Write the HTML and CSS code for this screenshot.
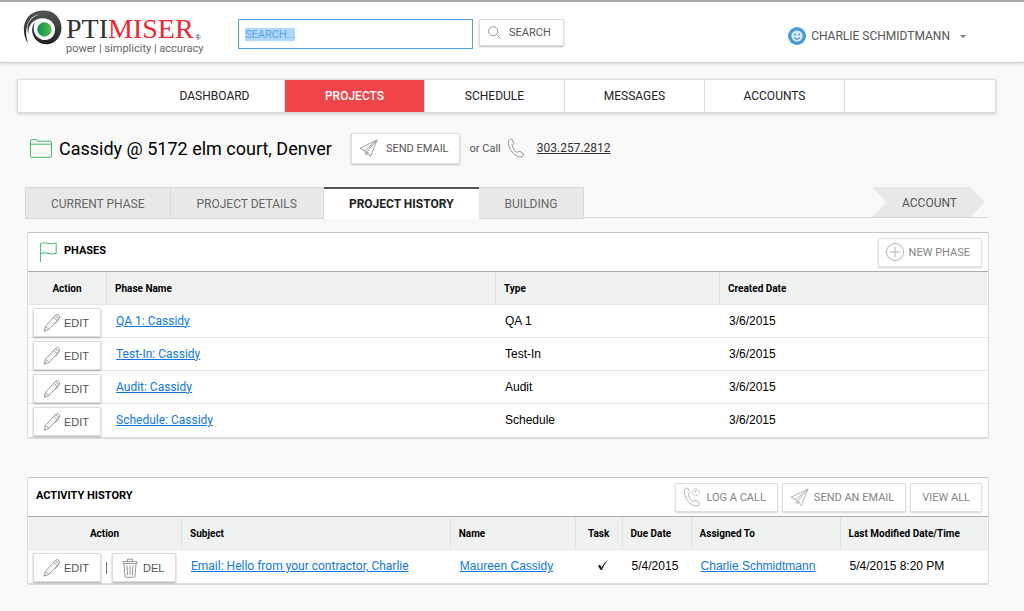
FILE: index.html
```
<!DOCTYPE html>
<html lang="en">
<head>
<meta charset="utf-8">
<title>Optimiser - Project History</title>
<link rel="stylesheet" href="styles.css">
</head>
<body>
<svg class="sprite" aria-hidden="true">
  <symbol id="pen" viewBox="0 0 18 20"><path d="M1.2 18.2 2.4 13.4 12.3 2.6 Q13.8 .8 15.8 2.2 Q17.4 3.8 16 5.6 L6 16.4ZM2.4 13.4 6 16.4M12.3 2.6 16 5.6M10.6 4.4 14.3 7.5M1.6 16.4 3 17.6M16.2 5.8 12.4 10.6"/></symbol>
  <symbol id="plane" viewBox="0 0 20 20"><path d="M19 1 1 9.8 6.2 12.2ZM19 1 8.6 13.2 12 18.6ZM6.2 12.2 7.4 16.4 8.6 13.2M7.4 16.4 10 15.2"/></symbol>
  <symbol id="phone" viewBox="0 0 18 20"><path d="M1.6 2.6 Q3.6 .2 5.4 1.6 L6.6 5.4 Q6.6 6.8 5 7.6 Q6.2 11.6 9.8 14.6 Q11.4 13 13 13.4 L16.4 15.6 Q17.6 17.4 14.8 18.8 Q10.6 20 5.6 14.6 Q.2 8 1.6 2.6Z"/></symbol>
  <symbol id="trash" viewBox="0 0 16 20"><path d="M1 3.5H15V5.5H1ZM5.5 3.5V1.2H10.5V3.5M2 5.5 3 18 Q3 19.3 4.3 19.3H11.7Q13 19.3 13 18L14 5.5M5 7.5 5.6 17.2M8 7.5V17.2M11 7.5 10.4 17.2"/></symbol>
</svg>

<header class="topbar">
  <a class="logo" href="#" aria-label="Optimiser">
    <svg class="logo-mark" viewBox="0 0 40 36" aria-hidden="true">
      <defs>
        <linearGradient id="ring" x1="0" y1="0" x2="0" y2="1"><stop offset="0" stop-color="#555"/><stop offset="1" stop-color="#222"/></linearGradient>
        <linearGradient id="core"><stop offset="0" stop-color="#079247"/><stop offset="1" stop-color="#5dbb55"/></linearGradient>
      </defs>
      <path fill="url(#ring)" d="M5.2 34 C-1.5 24 -.5 10 8.5 3.8 C15 -.6 27 -1 33.2 5.2 C40 12 40 23 34.5 29 C29.5 35.5 19.5 36 14 30.8 C8 25.5 7.5 17 12.4 11.8 C9.2 19 11 25 16 28.2 C22 32 29 29.5 31.2 24 C34 16.5 29.5 9.5 22 8.5 C10.5 7 3.6 17 5.8 25 C1.8 16 7 7 16 4.8 C9 4.5 -1.2 15 5.2 34Z"/>
      <circle cx="21.5" cy="19.5" r="7.2" fill="url(#core)"/>
    </svg>
    <span class="logo-words">
      <span class="logo-name">PTI<b>MISER</b><i>®</i></span>
      <span class="logo-tag">power | simplicity | accuracy</span>
    </span>
  </a>
  <form class="search">
    <input id="q" class="search-box" type="text" value="SEARCH..." aria-label="Search">
    <button class="btn search-btn" type="button">
      <svg class="ico ico-lens" viewBox="0 0 13 13"><circle cx="5.2" cy="5.2" r="4.6"/><path d="M8.6 8.6 12.4 12.4"/></svg>SEARCH</button>
  </form>
  <button class="user" type="button">
    <svg class="avatar" viewBox="0 0 18 18"><circle cx="9" cy="9" r="9" fill="#4a9ad4"/><circle cx="9" cy="9" r="5.6" fill="#d8ecf8"/><path d="M7 6.6V8.6M11 6.6V8.6M6 10.6Q9 13.6 12 10.6" fill="none" stroke="#3e87bd" stroke-width="1.2"/></svg>
    CHARLIE SCHMIDTMANN<span class="caret"></span></button>
</header>

<nav class="mainnav">
  <a href="#">DASHBOARD</a><a href="#" class="active">PROJECTS</a><a href="#">SCHEDULE</a><a href="#">MESSAGES</a><a href="#">ACCOUNTS</a>
</nav>

<main class="page">
  <div class="title-row">
    <svg class="ico ico-folder" viewBox="0 0 22 19"><path d="M.5 17V2Q.5 .6 2 .6H6Q7.4 .6 7.6 2.2H20Q21.5 2.2 21.5 3.8V17Q21.5 18.4 20 18.4H2Q.5 18.4 .5 17ZM.5 5.2H21.5"/></svg>
    <h1>Cassidy @ 5172 elm court, Denver</h1>
    <button class="btn email-btn" type="button"><svg class="ico ico-plane"><use href="#plane"/></svg>SEND EMAIL</button>
    <span class="or-call">or Call</span>
    <svg class="ico ico-phone"><use href="#phone"/></svg>
    <a class="phone" href="tel:3032572812">303.257.2812</a>
  </div>

  <div class="tabs">
    <a class="tab" href="#">CURRENT PHASE</a>
    <a class="tab" href="#">PROJECT DETAILS</a>
    <a class="tab current" href="#">PROJECT HISTORY</a>
    <a class="tab" href="#">BUILDING</a>
    <div class="tab-line"><a class="arrow" href="#">ACCOUNT</a></div>
  </div>

  <section class="panel">
    <div class="panel-head">
      <svg class="ico ico-flag" viewBox="0 0 17 20"><path d="M.6 20V1.4Q4 .2 8 1.4T16.2 1V11.4Q12 12.6 8 11.4T.6 11.4"/></svg>
      <h2>PHASES</h2>
      <div class="actions"><button class="btn soft" type="button"><svg class="ico ico-plus" viewBox="0 0 18 18"><circle cx="9" cy="9" r="8.5"/><path d="M9 3.6V14.4M3.6 9H14.4"/></svg>NEW PHASE</button></div>
    </div>
    <table class="phases">
      <colgroup><col class="p1"><col class="p2"><col class="p3"><col></colgroup>
      <thead><tr><th class="center">Action</th><th>Phase Name</th><th>Type</th><th>Created Date</th></tr></thead>
      <tbody>
        <tr><td class="act"><button class="btn edit" type="button"><svg class="ico ico-pen"><use href="#pen"/></svg>EDIT</button></td><td><a class="rb" href="#">QA 1: Cassidy</a></td><td>QA 1</td><td>3/6/2015</td></tr>
        <tr><td class="act"><button class="btn edit" type="button"><svg class="ico ico-pen"><use href="#pen"/></svg>EDIT</button></td><td><a class="rb" href="#">Test-In: Cassidy</a></td><td>Test-In</td><td>3/6/2015</td></tr>
        <tr><td class="act"><button class="btn edit" type="button"><svg class="ico ico-pen"><use href="#pen"/></svg>EDIT</button></td><td><a class="rb" href="#">Audit: Cassidy</a></td><td>Audit</td><td>3/6/2015</td></tr>
        <tr><td class="act"><button class="btn edit" type="button"><svg class="ico ico-pen"><use href="#pen"/></svg>EDIT</button></td><td><a class="rb" href="#">Schedule: Cassidy</a></td><td>Schedule</td><td>3/6/2015</td></tr>
      </tbody>
    </table>
  </section>

  <section class="panel">
    <div class="panel-head">
      <h2>ACTIVITY HISTORY</h2>
      <div class="actions">
        <button class="btn soft" type="button"><svg class="ico ico-log" viewBox="0 0 18 20"><use href="#phone" width="18" height="20"/><circle cx="13" cy="5" r="3.4" stroke-dasharray="2 1"/><path d="M13 3V5L11.4 4"/></svg>LOG A CALL</button>
        <button class="btn soft" type="button"><svg class="ico ico-plane"><use href="#plane"/></svg>SEND AN EMAIL</button>
        <button class="btn soft plain" type="button">VIEW ALL</button>
      </div>
    </div>
    <table class="activity">
      <colgroup><col class="a1"><col class="a2"><col class="a3"><col class="a4"><col class="a5"><col class="a6"><col></colgroup>
      <thead><tr><th class="center">Action</th><th>Subject</th><th>Name</th><th class="center">Task</th><th>Due Date</th><th>Assigned To</th><th>Last Modified Date/Time</th></tr></thead>
      <tbody>
        <tr>
          <td class="act"><div class="pair"><button class="btn edit" type="button"><svg class="ico ico-pen"><use href="#pen"/></svg>EDIT</button><span class="bar"></span><button class="btn edit" type="button"><svg class="ico ico-trash"><use href="#trash"/></svg>DEL</button></div></td>
          <td><a class="rb" href="#">Email: Hello from your contractor, Charlie</a></td>
          <td><a href="#">Maureen Cassidy</a></td>
          <td class="center"><svg class="tick" viewBox="0 0 12 12" role="img" aria-label="Done"><path d="M1 7 3 5.6 4.4 8.4Q7 3.4 11 .8Q7 5.4 5 11H3.6Z"/></svg></td>
          <td>5/4/2015</td>
          <td><a href="#">Charlie Schmidtmann</a></td>
          <td>5/4/2015 8:20 PM</td>
        </tr>
      </tbody>
    </table>
  </section>
</main>
<script src="page.js"></script>
</body>
</html>
```
FILE: styles.css
```
* { box-sizing: border-box; }
body { margin: 0; background: #f9f9f9; color: #111; font-family: Roboto, "Liberation Sans", sans-serif; font-size: 12px; }
.sprite { display: none; }
h1, h2 { margin: 0; }
a { color: #0f78dc; }
button { font-family: inherit; cursor: pointer; }

.topbar { display: flex; align-items: flex-start; height: 63px; padding: 8px 58px 0 23px; background: #fff; border-top: 2px solid #a8a8a8; border-bottom: 1px solid #ccc; box-shadow: 0 1px 3px #ddd; }
.logo { display: flex; color: #333; text-decoration: none; }
.logo-mark { width: 40px; height: 36px; }
.logo-words { display: flex; flex-direction: column; width: 175px; margin-top: 5px; padding-left: 3px; }
.logo-name { height: 28px; font: 28px/28px "Liberation Serif", serif; white-space: nowrap; }
.logo-name b { color: #ee2630; font-weight: 400; }
.logo-name i { margin-left: 2px; font: 7px/8px "Liberation Sans", sans-serif; vertical-align: -2px; }
.logo-tag { font-size: 11px; line-height: 12px; color: #666; white-space: nowrap; }

.search { display: flex; gap: 6px; margin-top: 9px; }
.search-box { width: 235px; height: 30px; padding: 0 6px; border: 1px solid #4ea3ee; outline: 0; font: 11px Roboto, sans-serif; color: #58a4ea; background: #fff; }
.search-box::selection { background: #b2d7fe; color: #58a4ea; }

.btn { display: inline-flex; align-items: center; height: 30px; background: #fff; border: 1px solid #ddd; border-radius: 1px; box-shadow: 0 1px 2px #bbb; color: #555; font-size: 11px; white-space: nowrap; padding: 0 12px 0 8px; gap: 8px; }
.ico { fill: none; stroke: #999; stroke-width: 1; flex: none; }
.search-btn { height: 27px; }
.ico-lens { width: 13px; height: 13px; }

.user { display: flex; align-items: center; margin: 17px 0 0 auto; padding: 0; border: 0; background: none; color: #555; font-size: 12px; }
.avatar { width: 18px; height: 18px; margin-right: 5px; }
.caret { margin-left: 10px; border: 3px solid transparent; border-top-color: #777; border-bottom: 0; }

.mainnav { display: flex; height: 34px; margin: 16px 28px 0 17px; padding-left: 127px; background: #fff; border: 1px solid #ddd; box-shadow: 0 1px 3px #ccc; }
.mainnav a { display: flex; align-items: center; justify-content: center; flex: 0 1 140px; border-right: 1px solid #ddd; color: #222; text-decoration: none; }
.mainnav .active { background: #ef444a; color: #fff; font-weight: 500; }

.page { padding: 19px 35px 0 27px; }
.title-row { display: flex; align-items: center; padding-left: 3px; height: 32px; }
.ico-folder { width: 22px; height: 19px; stroke: #45b869; margin-right: 7px; }
h1 { margin-right: 19px; font-size: 18px; font-weight: 400; color: #000; white-space: nowrap; }
.email-btn { height: 31px; padding: 0 10px 0 7px; }
.ico-plane { width: 19px; height: 19px; }
.or-call { margin: 0 6px 0 10px; font-size: 11px; color: #555; }
.ico-phone { width: 18px; height: 20px; }
.phone { margin-left: 12px; color: #333; }

.tabs { display: flex; margin: 23px 0 0 -2px; height: 32px; }
.tab { display: flex; align-items: center; padding: 1px 26px 0; background: #e9e9e9; border: 1px solid #d8d8d8; border-left-width: 0; color: #666; text-decoration: none; white-space: nowrap; }
.tab:first-child { border-left-width: 1px; padding: 1px 25px 0; }
.tab.current { padding: 0 25px; background: #fff; color: #222; font-weight: 700; border: 0; border-top: 2px solid #555; }
.tab-line { display: flex; justify-content: flex-end; flex: 1; height: 31px; padding-right: 4px; border-bottom: 1px solid #d8d8d8; }
.arrow { display: flex; align-items: center; width: 113px; padding: 2px 0 0 30px; background: #e8e8e8; clip-path: polygon(0 0, 87% 0, 100% 50%, 87% 100%, 0 100%, 13% 50%); color: #555; text-decoration: none; }

.panel { margin-top: 13px; background: #fff; border: 1px solid #d8dddd; border-top-color: #c4c4c4; border-bottom: 2px solid #d8dddd; border-radius: 2px; }
.panel + .panel { margin-top: 38px; }
.panel-head { display: flex; align-items: center; height: 39px; padding: 0 6px 0 8px; border-bottom: 1px solid #a8abab; }
h2 { margin-bottom: 3px; font-size: 11px; font-weight: 700; color: #000; }
.ico-flag { width: 17px; height: 20px; margin: 0 7px 0 4px; stroke: #45b869; }
.actions { display: flex; gap: 4px; margin-left: auto; }
.soft { height: 29px; color: #858585; border-color: #e0e0e0; box-shadow: 0 1px 2px #d4d4d4; padding: 0 11px 0 7px; gap: 5px; }
.soft .ico { stroke: #b4b4b4; }
.ico-plus, .ico-log { width: 18px; height: 20px; }
.plain { padding: 0 11px; }

table { width: 100%; border-collapse: separate; border-spacing: 0; table-layout: fixed; }
th { height: 33px; padding: 0 8px; background: #f0f2f2; border-right: 1px solid #e0e3e5; border-bottom: 1px solid #e3e6e8; font-size: 10px; font-weight: 700; text-align: left; color: #000; white-space: nowrap; }
th:last-child { border-right: 0; }
td { height: 33px; padding: 0 9px 1px; border-bottom: 1px solid #e6e8ea; font: 12px "Liberation Sans", Arial, sans-serif; color: #000; white-space: nowrap; }
tbody tr:last-child td { border-bottom: 0; }
.rb { font-family: Roboto, sans-serif; }
.center { text-align: center; }
td.act { padding: 3px 5px 0; vertical-align: top; }
.edit { height: 29px; padding: 0 11px 0 9px; gap: 3px; box-shadow: 0 1px 2px #aaa; vertical-align: top; }
.ico-pen { width: 18px; height: 20px; }
.ico-trash { width: 16px; height: 20px; margin-right: 2px; }
.pair { display: flex; align-items: center; gap: 5px; }
.bar { flex: none; width: 1px; height: 12px; background: #777; }
.tick { width: 12px; height: 12px; fill: #222; margin-left: 8px; }

.p1 { width: 79px; }
.p2 { width: 389px; }
.p3 { width: 224px; }
.a1 { width: 154px; }
.a2 { width: 28%; }
.a3 { width: 13%; }
.a4 { width: 47px; }
.a5 { width: 69px; }
.a6 { width: 149px; }
```
FILE: page.js
```
const box = document.getElementById('q');
box.focus();
box.select();
```
